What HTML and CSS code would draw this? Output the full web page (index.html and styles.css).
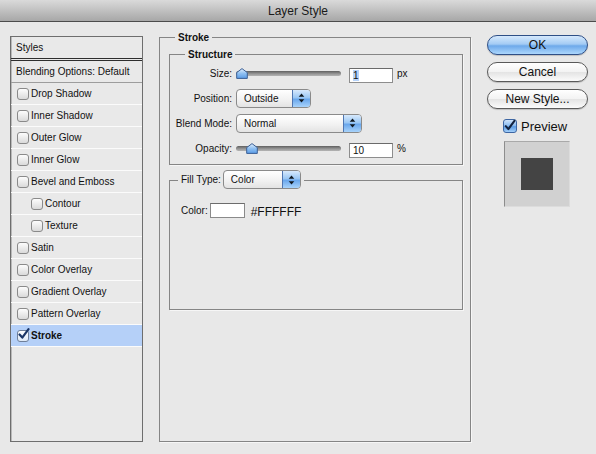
FILE: index.html
```html
<!DOCTYPE html>
<html>
<head>
<meta charset="utf-8">
<title>Layer Style</title>
<link rel="stylesheet" href="styles.css">
</head>
<body>
<div class="window">
  <div class="titlebar">Layer Style</div>
  <div class="content">
    <div class="stylelist">
      <div class="row head first">Styles</div>
      <div class="row head blend">Blending Options: Default</div>
      <div class="row"><span class="cb"></span>Drop Shadow</div>
      <div class="row"><span class="cb"></span>Inner Shadow</div>
      <div class="row"><span class="cb"></span>Outer Glow</div>
      <div class="row"><span class="cb"></span>Inner Glow</div>
      <div class="row"><span class="cb"></span>Bevel and Emboss</div>
      <div class="row sub"><span class="cb"></span>Contour</div>
      <div class="row sub"><span class="cb"></span>Texture</div>
      <div class="row"><span class="cb"></span>Satin</div>
      <div class="row"><span class="cb"></span>Color Overlay</div>
      <div class="row"><span class="cb"></span>Gradient Overlay</div>
      <div class="row"><span class="cb"></span>Pattern Overlay</div>
      <div class="row selected"><span class="cb checked"><svg class="check" width="14" height="13" viewBox="0 0 14 13"><path d="M2.5 6.5 L5.3 9.6 L11.5 1.2" fill="none" stroke="#1b3566" stroke-width="2.2" stroke-linecap="round" stroke-linejoin="round"/></svg></span>Stroke</div>
    </div>

    <div class="group outer">
      <div class="legend">Stroke</div>
      <div class="group structure">
        <div class="legend">Structure</div>
        <div class="form">
          <div class="lbl">Size:</div>
          <div class="ctl">
            <div class="slider">
              <div class="track"></div>
              <svg class="thumb" style="left:0px" width="12" height="11" viewBox="0 0 12 11"><defs><linearGradient id="tg1" x1="0" y1="0" x2="0" y2="1"><stop offset="0" stop-color="#e6f1fd"/><stop offset="0.5" stop-color="#8fc0f2"/><stop offset="1" stop-color="#5b9ce6"/></linearGradient></defs><path d="M6 0.6 L11.3 4.6 L11.3 10.4 L0.7 10.4 L0.7 4.6 Z" fill="url(#tg1)" stroke="#3b5f95" stroke-width="1" stroke-linejoin="round"/></svg>
            </div>
            <div class="num"><span class="sel">1</span></div><span class="unit">px</span>
          </div>
          <div class="lbl">Position:</div>
          <div class="ctl">
            <div class="popup w-pos"><span class="ptxt">Outside</span><span class="step"><svg width="7" height="10" viewBox="0 0 7 10"><path d="M3.5 0.5 L6.3 3.8 L0.7 3.8 Z M0.7 6.2 L6.3 6.2 L3.5 9.5 Z" fill="#101820"/></svg></span></div>
          </div>
          <div class="lbl">Blend Mode:</div>
          <div class="ctl">
            <div class="popup w-blend"><span class="ptxt">Normal</span><span class="step"><svg width="7" height="10" viewBox="0 0 7 10"><path d="M3.5 0.5 L6.3 3.8 L0.7 3.8 Z M0.7 6.2 L6.3 6.2 L3.5 9.5 Z" fill="#101820"/></svg></span></div>
          </div>
          <div class="lbl">Opacity:</div>
          <div class="ctl">
            <div class="slider">
              <div class="track"></div>
              <svg class="thumb" style="left:10px" width="12" height="11" viewBox="0 0 12 11"><defs><linearGradient id="tg2" x1="0" y1="0" x2="0" y2="1"><stop offset="0" stop-color="#e6f1fd"/><stop offset="0.5" stop-color="#8fc0f2"/><stop offset="1" stop-color="#5b9ce6"/></linearGradient></defs><path d="M6 0.6 L11.3 4.6 L11.3 10.4 L0.7 10.4 L0.7 4.6 Z" fill="url(#tg2)" stroke="#3b5f95" stroke-width="1" stroke-linejoin="round"/></svg>
            </div>
            <div class="num">10</div><span class="unit">%</span>
          </div>
        </div>
      </div>

      <div class="group fill">
        <div class="legend filllegend">
          <span>Fill Type:</span>
          <div class="popup w-fill"><span class="ptxt">Color</span><span class="step"><svg width="7" height="10" viewBox="0 0 7 10"><path d="M3.5 0.5 L6.3 3.8 L0.7 3.8 Z M0.7 6.2 L6.3 6.2 L3.5 9.5 Z" fill="#101820"/></svg></span></div>
        </div>
        <div class="colorrow">
          <span>Color:</span>
          <span class="swatch"></span>
          <span class="hex">#FFFFFF</span>
        </div>
      </div>
    </div>

    <div class="side">
      <div class="btn default">OK</div>
      <div class="btn">Cancel</div>
      <div class="btn">New Style...</div>
      <div class="preview-row">
        <span class="aquacb"><svg width="14" height="14" viewBox="0 0 14 14"><path d="M3 7.2 L5.8 10.3 L12.3 1.5" fill="none" stroke="#13233f" stroke-width="2.2" stroke-linecap="round" stroke-linejoin="round"/></svg></span>
        <span class="pvtxt">Preview</span>
      </div>
      <div class="preview-box"><div class="preview-square"></div></div>
    </div>
  </div>
</div>
</body>
</html>
```

FILE: styles.css
```css
html, body {
  margin: 0;
  padding: 0;
}
body {
  background: #e8e8e8;
  font-family: "Liberation Sans", Arial, sans-serif;
  font-size: 10px;
  color: #111;
  width: 596px;
  height: 454px;
  overflow: hidden;
}
.window {
  width: 596px;
  height: 454px;
}
.titlebar {
  height: 21px;
  border-bottom: 1px solid #4c4c4c;
  background: linear-gradient(#dadada, #a7a7a7);
  text-align: center;
  line-height: 22px;
  font-size: 12px;
  color: #1a1a1a;
}
.content {
  display: flex;
  align-items: flex-start;
  padding: 14px 0 0 10px;
}

/* style list */
.stylelist {
  width: 133px;
  height: 406px;
  box-sizing: border-box;
  border: 1px solid #6e6e6e;
  box-shadow: inset 1px 0 0 #b9b9b9;
  background: #e9e9e9;
}
.row {
  height: 21px;
  border-bottom: 1px solid #fbfbfb;
  display: flex;
  align-items: center;
  gap: 2px;
  padding-left: 6px;
  white-space: nowrap;
}
.row.head {
  padding-left: 5px;
}
.row.first {
  border-bottom: 3px double #2e2e2e;
}
.row.blend {
  border-bottom-color: #9d9d9d;
}
.row.sub {
  padding-left: 20px;
}
.row.selected {
  background: #b5d0f8;
  font-weight: bold;
}
.cb {
  position: relative;
  width: 10px;
  height: 10px;
  border: 1px solid #8a8a8a;
  border-radius: 3px;
  background: linear-gradient(#fdfdfd, #dadada);
  flex: none;
}
.cb.checked {
  border-color: #6f7f99;
  background: linear-gradient(#ffffff, #dde8f6);
}
.check {
  position: absolute;
  left: -1px;
  top: -3px;
}

/* groups */
.group {
  border: 1px solid #858585;
  box-sizing: border-box;
  box-shadow: 1px 1px 0 #f6f6f6;
}
.legend {
  margin-top: -7px;
  height: 13px;
  line-height: 13px;
  background: #e8e8e8;
  padding: 0 3px;
  width: fit-content;
  margin-left: 15px;
  font-weight: bold;
}
.outer {
  margin-left: 16px;
  margin-top: 1px;
  width: 312px;
  height: 405px;
}
.structure {
  margin: 10px 0 0 9px;
  width: 294px;
  padding-bottom: 6px;
}
.form {
  margin-top: 2px;
  display: grid;
  grid-template-columns: 62px 1fr;
  grid-auto-rows: 20px;
  row-gap: 5px;
  column-gap: 4px;
  align-items: center;
}
.lbl {
  justify-self: end;
  white-space: nowrap;
}
.ctl {
  display: flex;
  align-items: center;
  height: 20px;
}
.slider {
  position: relative;
  width: 105px;
  height: 20px;
  display: flex;
  align-items: center;
}
.track {
  width: 100%;
  height: 5px;
  border-radius: 3px;
  background: linear-gradient(#5f5f5f, #999 60%, #b4b4b4);
  margin-top: 1px;
}
.thumb {
  position: absolute;
  top: 5px;
}
.num {
  width: 44px;
  height: 15px;
  box-sizing: border-box;
  border: 1px solid #8d8d8d;
  border-top-color: #6a6a6a;
  background: #fff;
  margin-left: 8px;
  margin-top: 4px;
  padding-left: 3px;
  line-height: 13px;
}
.sel {
  background: #b6d3fa;
}
.unit {
  margin-left: 4px;
}
.popup {
  display: flex;
  height: 19px;
  box-sizing: border-box;
  border: 1px solid #8a8a8a;
  border-radius: 4px;
  background: linear-gradient(#ffffff, #f2f2f2 55%, #e3e3e3);
  overflow: hidden;
  font-weight: normal;
}
.ptxt {
  flex: 1;
  padding-left: 7px;
  line-height: 17px;
}
.step {
  width: 17px;
  display: flex;
  align-items: center;
  justify-content: center;
  border-left: 1px solid #4f76b1;
  background: linear-gradient(#d7e9fc, #9ac7f4 45%, #6aa7ec 55%, #a8d3fb);
}
.w-pos { width: 75px; }
.w-blend { width: 126px; }
.w-fill { width: 78px; }

.fill {
  margin: 15px 0 0 9px;
  width: 294px;
  height: 130px;
}
.filllegend {
  display: flex;
  align-items: center;
  gap: 2px;
  margin-top: -11px;
  height: 19px;
  margin-left: 8px;
  font-weight: normal;
}
.colorrow {
  margin-top: 14px;
  padding-left: 11px;
  display: flex;
  align-items: center;
  gap: 2px;
  height: 15px;
}
.swatch {
  width: 35px;
  height: 15px;
  box-sizing: border-box;
  border: 1px solid #8a8a8a;
  border-top-color: #6c6c6c;
  background: #fff;
}
.hex {
  margin-left: 4px;
  font-size: 12px;
  margin-top: 2px;
}

/* right side */
.side {
  margin-left: 16px;
  margin-top: -1px;
  display: flex;
  flex-direction: column;
  gap: 7px;
  width: 101px;
}
.btn {
  height: 20px;
  box-sizing: border-box;
  border-radius: 10px;
  border: 1px solid #5a5a5a;
  background: linear-gradient(#ffffff, #f3f3f3 48%, #e4e4e4 52%, #fbfbfb);
  text-align: center;
  line-height: 18px;
  font-size: 12px;
  color: #111;
  box-shadow: 0 1px 1px rgba(0,0,0,0.18);
}
.btn.default {
  border-color: #2f4f86;
  background: linear-gradient(#d6e9fc, #a3cbf4 45%, #6ea9ea 55%, #acd7fd);
}
.preview-row {
  margin-top: 3px;
  padding-left: 16px;
  display: flex;
  align-items: center;
  gap: 4px;
  height: 14px;
}
.aquacb {
  width: 14px;
  height: 14px;
  box-sizing: border-box;
  border: 1px solid #3d66a3;
  border-radius: 3px;
  background: linear-gradient(#cfe4fb, #86b9ef 50%, #5b9be4 55%, #a3cff9);
  display: flex;
  overflow: visible;
}
.aquacb svg {
  margin: -1px 0 0 -1px;
}
.pvtxt {
  font-size: 13px;
}
.preview-box {
  margin-top: 1px;
  margin-left: 17px;
  width: 66px;
  height: 66px;
  box-sizing: border-box;
  background: #d1d1d1;
  border: 1px solid #dcdcdc;
  border-top-color: #a9a9a9;
  border-left-color: #8d8d8d;
  display: flex;
  align-items: center;
  justify-content: center;
}
.preview-square {
  width: 32px;
  height: 32px;
  background: #444;
}
```
